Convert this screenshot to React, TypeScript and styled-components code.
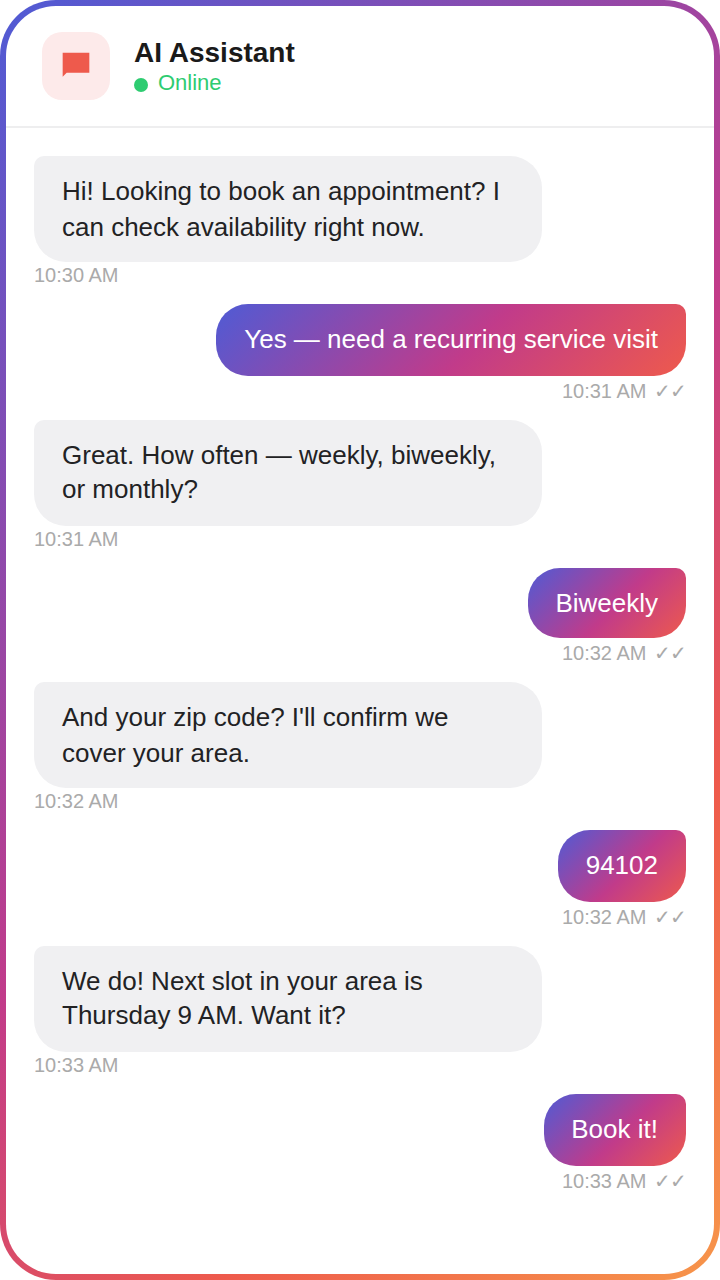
import React from "react";
import styled, { createGlobalStyle } from "styled-components";

const messages = [
  { from: "bot", text: "Hi! Looking to book an appointment? I can check availability right now.", time: "10:30 AM" },
  { from: "me", text: "Yes — need a recurring service visit", time: "10:31 AM" },
  { from: "bot", text: "Great. How often — weekly, biweekly, or monthly?", time: "10:31 AM" },
  { from: "me", text: "Biweekly", time: "10:32 AM" },
  { from: "bot", text: "And your zip code? I'll confirm we cover your area.", time: "10:32 AM" },
  { from: "me", text: "94102", time: "10:32 AM" },
  { from: "bot", text: "We do! Next slot in your area is Thursday 9 AM. Want it?", time: "10:33 AM" },
  { from: "me", text: "Book it!", time: "10:33 AM" },
];

// designed at 360x640, shown at 2x
const App: React.FC = () => (
  <>
    <GlobalStyle />
    <Frame>
      <Screen>
        <Header>
          <IconBox>
            <svg width="16" height="16" viewBox="0 0 24 24">
              <path d="M2 2h20v15H5l-3 3V2z" fill="#ee5a4c" />
            </svg>
          </IconBox>
          <div>
            <Title>AI Assistant</Title>
            <Status>
              <Dot />
              Online
            </Status>
          </div>
        </Header>
        <Chat>
          {messages.map((m, i) => (
            <Row key={i} $mine={m.from === "me"}>
              <Bubble $mine={m.from === "me"}>{m.text}</Bubble>
              <Time $mine={m.from === "me"}>
                {m.time}
                {m.from === "me" && <Checks> ✓✓</Checks>}
              </Time>
            </Row>
          ))}
        </Chat>
      </Screen>
    </Frame>
  </>
);

export default App;

const GlobalStyle = createGlobalStyle`
  html, body {
    margin: 0;
    padding: 0;
    background: #fff;
  }
  * {
    box-sizing: border-box;
  }
  body {
    height: 1280px;
    overflow: hidden;
    font-family: "Liberation Sans", Arial, sans-serif;
  }
`;

const Frame = styled.div`
  width: 360px;
  height: 640px;
  padding: 3px;
  border-radius: 28px;
  background: linear-gradient(135deg, #4f5bd5 0%, #c13b8a 50%, #ee5a4c 75%, #f7964a 100%);
  transform: scale(2);
  transform-origin: top left;
`;

const Screen = styled.div`
  height: 100%;
  background: #fff;
  border-radius: 25px;
  overflow: hidden;
  display: flex;
  flex-direction: column;
`;

const Header = styled.header`
  height: 61px;
  flex: none;
  display: flex;
  align-items: flex-start;
  gap: 12px;
  padding: 13px 18px 0;
  border-bottom: 1px solid #eeeeef;
`;

const IconBox = styled.div`
  width: 34px;
  height: 34px;
  border-radius: 10px;
  background: #fdeaea;
  display: flex;
  align-items: center;
  justify-content: center;
`;

const Title = styled.div`
  margin-top: 1.5px;
  font-size: 14px;
  font-weight: 700;
  line-height: 16px;
  color: #1a1a1a;
`;

const Status = styled.div`
  display: flex;
  align-items: center;
  gap: 5px;
  font-size: 11px;
  line-height: 14px;
  color: #2ecc71;
`;

const Dot = styled.span`
  width: 7px;
  height: 7px;
  margin-top: 3px;
  border-radius: 50%;
  background: #2ecc71;
`;

const Chat = styled.main`
  flex: 1;
  display: flex;
  flex-direction: column;
  gap: 8px;
  padding: 14px 14px 0;
`;

const Row = styled.div<{ $mine: boolean }>`
  display: flex;
  flex-direction: column;
  align-items: ${(p) => (p.$mine ? "flex-end" : "flex-start")};
`;

const Bubble = styled.div<{ $mine: boolean }>`
  max-width: 78%;
  padding: 9px 14px;
  font-size: 13px;
  line-height: 1.35;
  color: ${(p) => (p.$mine ? "#fff" : "#222224")};
  background: ${(p) =>
    p.$mine ? "linear-gradient(135deg, #4f5bd5 0%, #c13b8a 55%, #ee5a4c 100%)" : "#f0f0f2"};
  border-radius: ${(p) => (p.$mine ? "16px 5px 16px 16px" : "5px 16px 16px 16px")};
`;

const Time = styled.div<{ $mine: boolean }>`
  margin: ${(p) => (p.$mine ? "2px" : "1px")} 0 1px;
  font-size: 10px;
  line-height: 11px;
  color: #aaaaaa;
`;

const Checks = styled.span`
  margin-left: 1px;
`;
